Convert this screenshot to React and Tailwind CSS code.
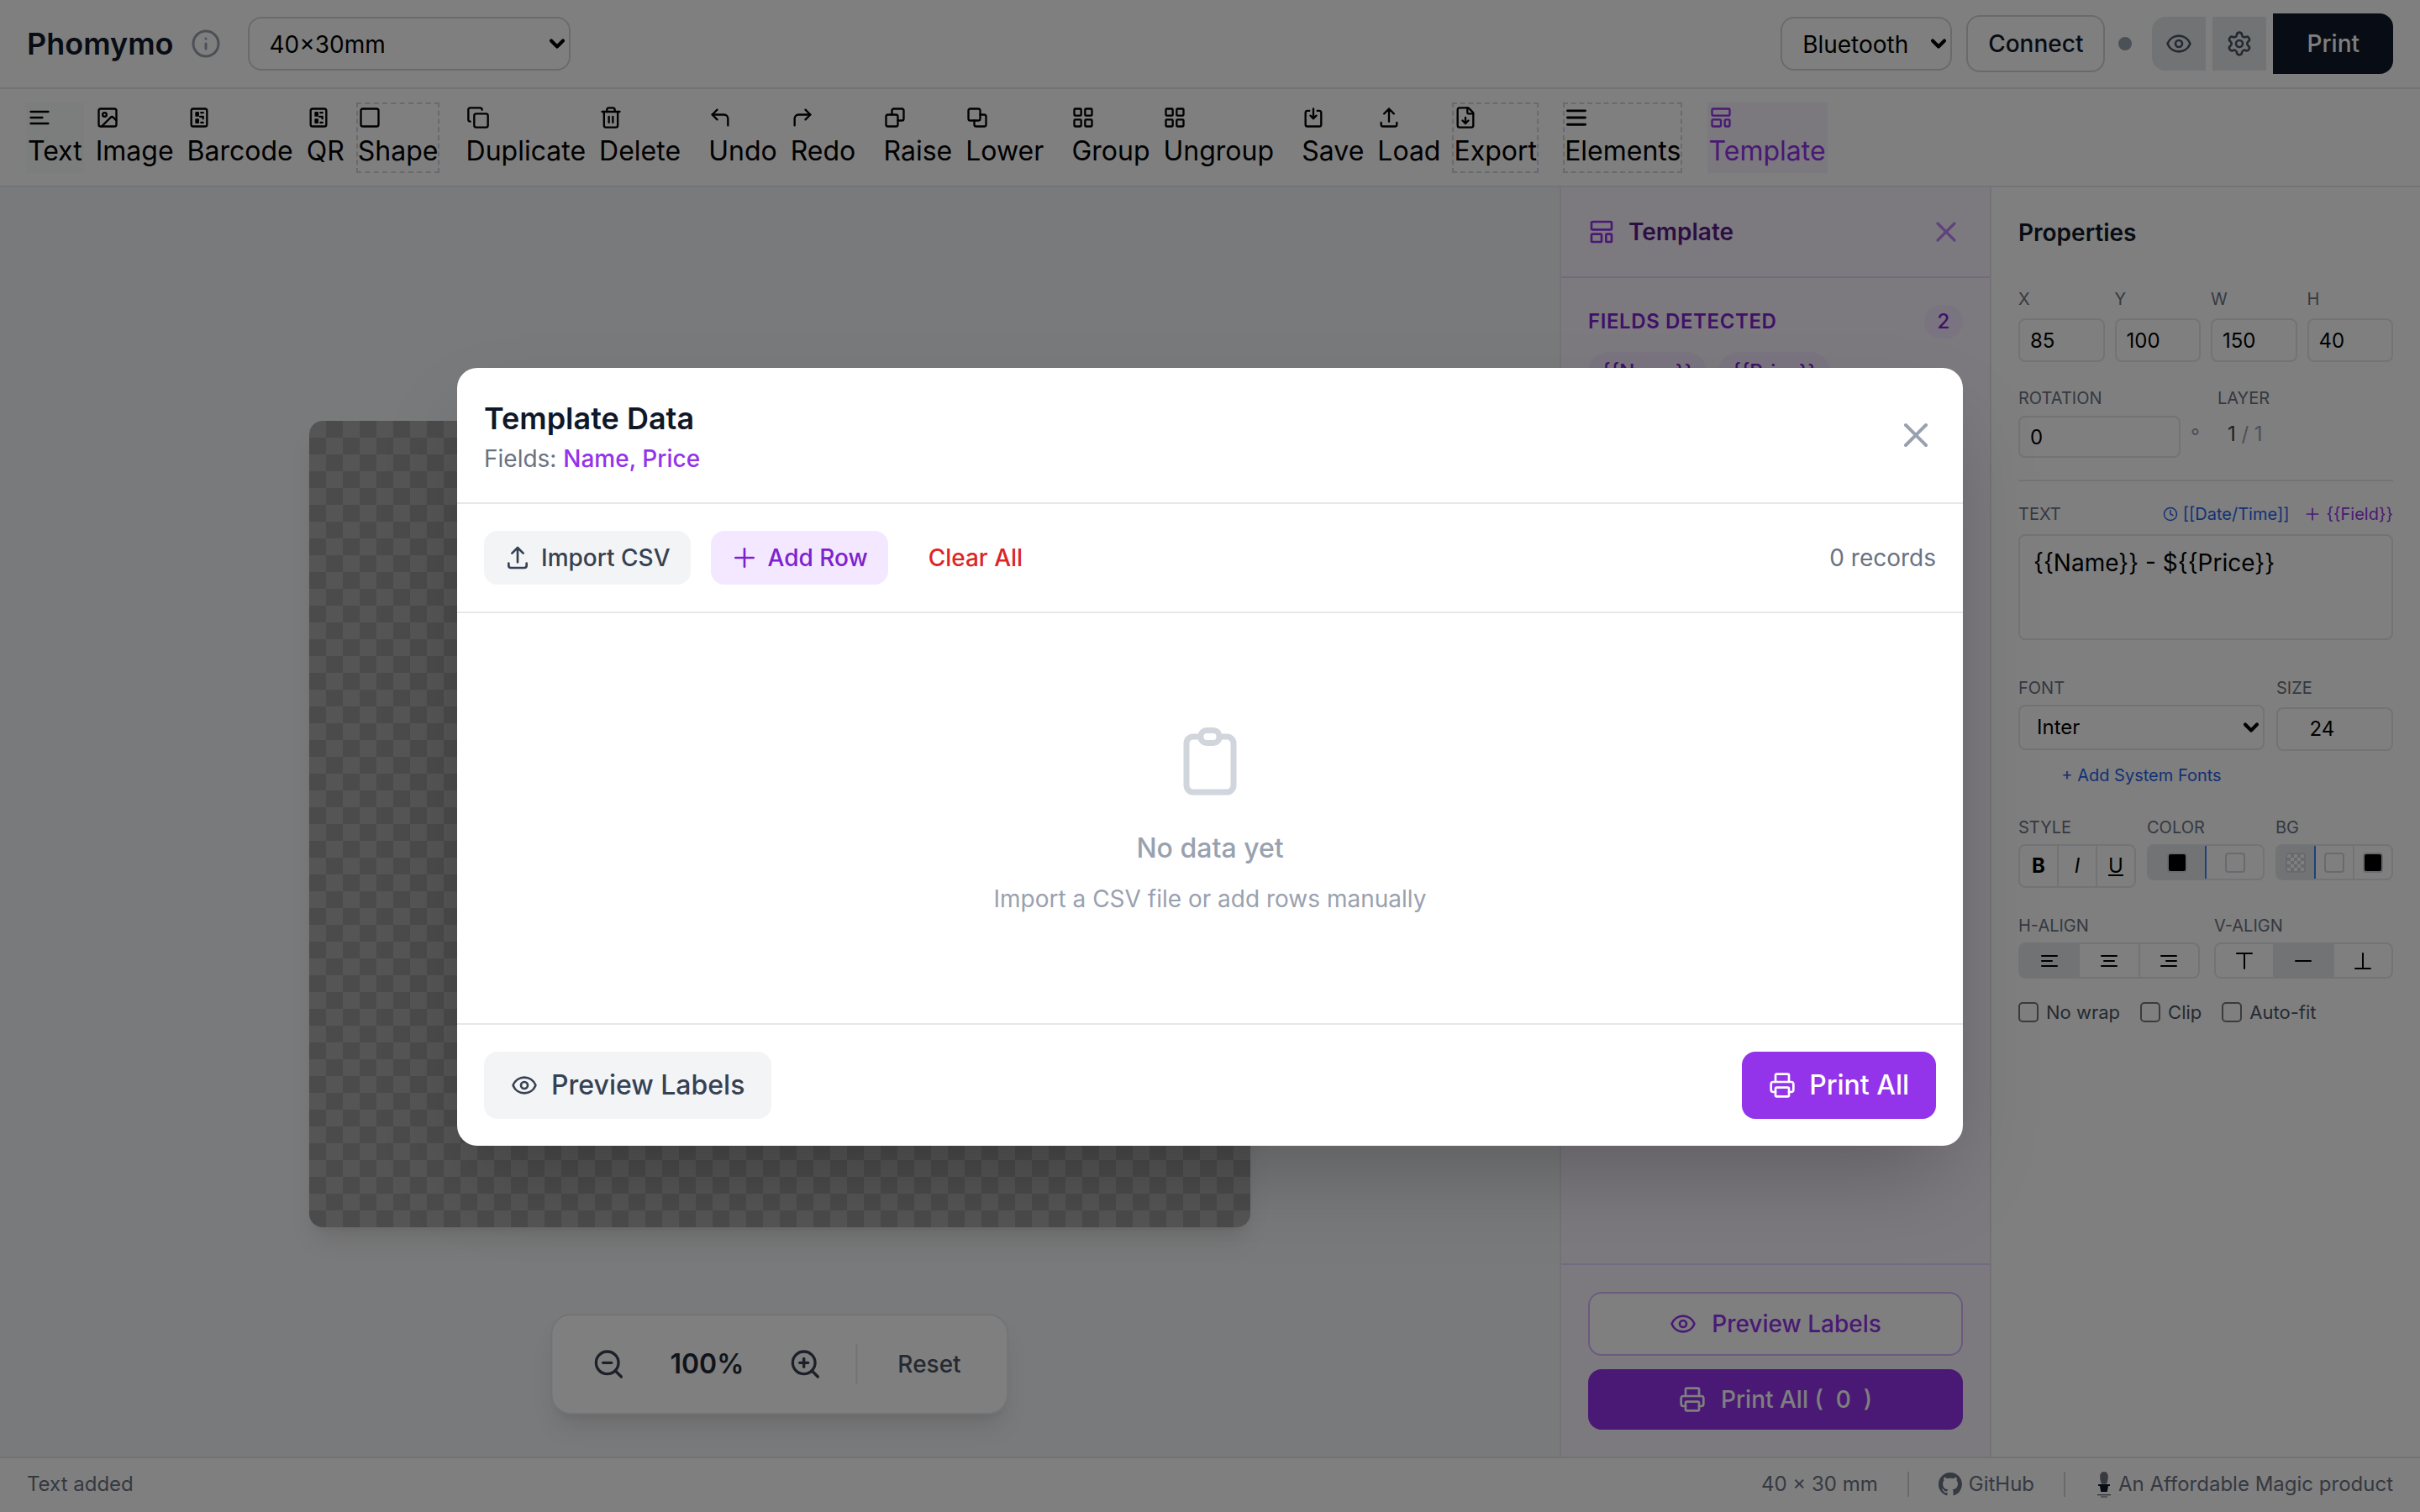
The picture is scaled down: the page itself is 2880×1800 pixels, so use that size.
import { AlignJustify, ChevronDown, Clock, Copy, CornerUpLeft, CornerUpRight, Eye, FileDown, Image, Info, LayoutGrid, LayoutTemplate, Printer, Settings, Trash2, X, ZoomIn, ZoomOut } from 'lucide-react';

// shrunk canvas is 1440x900 css px, shown at 2x through [zoom:2]
const Svg = ({ size = 14, sw = 2, className = '', children }) => (
  <svg width={size} height={size} viewBox="0 0 24 24" fill="none" stroke="currentColor" strokeWidth={sw} strokeLinecap="round" strokeLinejoin="round" className={className}>
    {children}
  </svg>
);

const TextIcon = () => <Svg><path d="M3 6h18M3 12h12M3 18h18" /></Svg>;
const BarcodeIcon = () => (
  <Svg>
    <rect x="4" y="3" width="16" height="18" rx="2" />
    <path d="M9 7h2v3H9zM14 7h2M13 11h3v2M9 14h2v3H9zM14 17h2" />
  </Svg>
);
const ShapeIcon = () => <Svg><rect x="3" y="3" width="18" height="18" rx="2" /></Svg>;
const RaiseIcon = () => (
  <Svg>
    <rect x="3" y="9" width="12" height="12" rx="2" />
    <path d="M9 9V5a2 2 0 0 1 2-2h8a2 2 0 0 1 2 2v8a2 2 0 0 1-2 2h-4" />
  </Svg>
);
const LowerIcon = () => (
  <Svg>
    <rect x="3" y="3" width="12" height="12" rx="2" />
    <path d="M15 9h4a2 2 0 0 1 2 2v8a2 2 0 0 1-2 2h-8a2 2 0 0 1-2-2v-4" />
  </Svg>
);
const SaveIcon = () => (
  <Svg>
    <path d="M8 5H6a2 2 0 0 0-2 2v12a2 2 0 0 0 2 2h12a2 2 0 0 0 2-2V7a2 2 0 0 0-2-2h-2" />
    <path d="M12 3v10M9 10l3 3 3-3" />
  </Svg>
);
const LoadIcon = ({ size = 14 }) => (
  <Svg size={size}>
    <path d="M4 17v2a2 2 0 0 0 2 2h12a2 2 0 0 0 2-2v-2M12 3v13M7 8l5-5 5 5" />
  </Svg>
);
const PlusIcon = ({ size = 16 }) => <Svg size={size}><path d="M12 4v16M20 12H4" /></Svg>;

const ToolBtn = ({ icon, label, dashed, active, soft }) => (
  <button
    className={`flex flex-col items-start border text-base leading-6 ${
      dashed ? 'border-dashed border-gray-300' : 'border-transparent'
    } ${active ? 'bg-[#f6f0fd] text-[#9333ea]' : 'text-black'} ${soft ? 'bg-gray-50' : ''}`}
  >
    <span className="flex h-4 items-center">{icon}</span>
    <span>{label}</span>
  </button>
);

const toolGroups = [
  [
    { icon: <TextIcon />, label: 'Text', soft: true },
    { icon: <Image size={14} />, label: 'Image' },
    { icon: <BarcodeIcon />, label: 'Barcode' },
    { icon: <BarcodeIcon />, label: 'QR' },
    { icon: <ShapeIcon />, label: 'Shape', dashed: true },
  ],
  [
    { icon: <Copy size={14} />, label: 'Duplicate' },
    { icon: <Trash2 size={14} />, label: 'Delete' },
  ],
  [
    { icon: <CornerUpLeft size={14} />, label: 'Undo' },
    { icon: <CornerUpRight size={14} />, label: 'Redo' },
  ],
  [
    { icon: <RaiseIcon />, label: 'Raise' },
    { icon: <LowerIcon />, label: 'Lower' },
  ],
  [
    { icon: <LayoutGrid size={14} />, label: 'Group' },
    { icon: <LayoutGrid size={14} />, label: 'Ungroup' },
  ],
  [
    { icon: <SaveIcon />, label: 'Save' },
    { icon: <LoadIcon />, label: 'Load' },
    { icon: <FileDown size={14} />, label: 'Export', dashed: true },
  ],
  [{ icon: <AlignJustify size={14} strokeWidth={2.5} />, label: 'Elements', dashed: true }],
  [{ icon: <LayoutTemplate size={14} />, label: 'Template', active: true }],
];

const Label = ({ children, className = '' }) => (
  <div className={`text-[10px] leading-[15px] uppercase text-gray-500 ${className}`}>{children}</div>
);

const NumInput = ({ value, className = '' }) => (
  <input
    readOnly
    value={value}
    className={`min-w-0 rounded border border-gray-200 bg-white px-1.5 text-xs text-black ${className}`}
  />
);

const Select = ({ value, className = '', selectClass = '' }) => (
  <div className={`relative ${className}`}>
    <select className={`h-full w-full appearance-none border bg-white text-black ${selectClass}`}>
      <option>{value}</option>
    </select>
    <ChevronDown size={14} strokeWidth={3.5} className="pointer-events-none absolute right-px top-1/2 -translate-y-1/2 text-black" />
  </div>
);

const Seg = ({ active, className = '', children }) => (
  <div className={`flex flex-1 items-center justify-center ${active ? 'bg-gray-200' : ''} ${className}`}>{children}</div>
);

const Swatch = ({ className = '' }) => <div className={`h-3 w-3 rounded-[2px] border border-gray-300 ${className}`} />;

const AlignIcon = ({ d }) => <Svg size={12} sw={2}><path d={d} /></Svg>;

const App = () => {
  return (
    <div className="relative h-[900px] w-[1440px] overflow-hidden bg-white font-['Inter',sans-serif] [zoom:2]">
      <div className="flex h-full flex-col">
        {/* Header */}
        <header className="flex h-[53px] shrink-0 items-center border-b border-gray-200 px-4">
          <h1 className="text-lg font-semibold text-gray-900">Phomymo</h1>
          <Info size={18} className="ml-2.5 text-gray-400" />
          <Select value="40×30mm" className="ml-4 h-8 w-48" selectClass="rounded-lg border-gray-300 px-3 pt-px text-sm" />
          <div className="ml-auto flex items-center">
            <Select value="Bluetooth" className="h-8 w-[102px]" selectClass="rounded-lg border-gray-300 px-3 pt-px text-sm" />
            <button className="ml-[8.5px] h-[34px] rounded-lg border border-gray-300 px-3 text-sm font-medium text-gray-900">Connect</button>
            <span className="ml-2 h-2 w-2 rounded-full bg-gray-400" />
            <button className="ml-3 flex h-8 w-8 items-center justify-center rounded-l-lg bg-gray-200 text-gray-600"><Eye size={16} /></button>
            <button className="ml-1 flex h-8 w-8 items-center justify-center bg-gray-200 text-gray-600"><Settings size={16} /></button>
            <button className="ml-1 h-9 rounded-r-lg bg-gray-900 px-5 text-sm font-medium text-white">Print</button>
          </div>
        </header>

        {/* Toolbar */}
        <div className="flex h-[58.5px] shrink-0 items-start gap-[14.6px] border-b border-gray-200 pl-[15.5px] pt-2">
          {toolGroups.map((group, i) => (
            <div key={i} className="flex gap-[6px]">
              {group.map((tool) => (
                <ToolBtn key={tool.label} {...tool} />
              ))}
            </div>
          ))}
        </div>

        <div className="flex min-h-0 flex-1">
          {/* Canvas */}
          <main className="relative flex flex-1 items-center justify-center bg-gray-100 pt-0.5">
            <div className="h-[480px] w-[560px] rounded-lg bg-[conic-gradient(#969696_25%,#aaaaaa_0_50%,#969696_0_75%,#aaaaaa_0)] bg-[length:20px_20px] shadow-lg" />
            <div className="absolute bottom-[25px] left-1/2 flex h-[60px] -translate-x-1/2 items-center gap-2 rounded-xl border border-gray-200 bg-white px-[15.5px] shadow-lg">
              <button className="p-2 text-gray-700"><ZoomOut size={20} /></button>
              <span className="w-[65px] text-center text-base font-semibold text-gray-800">100%</span>
              <button className="p-2 text-gray-700"><ZoomIn size={20} /></button>
              <span className="mx-1 h-6 w-px bg-gray-200" />
              <button className="px-3 text-sm font-medium text-gray-600">Reset</button>
            </div>
          </main>

          {/* Template panel */}
          <aside className="flex w-64 shrink-0 flex-col border-l border-gray-200 bg-[#faf5ff]">
            <div className="flex h-[54px] shrink-0 items-center justify-between border-b border-[#e9d5ff] px-4">
              <div className="flex items-center gap-2">
                <LayoutTemplate size={16} className="text-[#9333ea]" />
                <span className="text-sm font-semibold text-[#581c87]">Template</span>
              </div>
              <X size={20} className="text-[#c084fc]" />
            </div>
            <div className="flex-1 px-4 pt-4">
              <div className="flex items-center justify-between">
                <span className="text-xs font-semibold uppercase tracking-wide text-[#7e22ce]">Fields detected</span>
                <span className="flex h-5 w-[23px] items-center justify-center rounded-full bg-[#f3e8ff] text-xs font-medium text-[#7e22ce]">2</span>
              </div>
              <div className="mt-2 flex gap-[7px]">
                <span className="rounded-full bg-[#f3e8ff] px-2 py-1 text-xs font-medium text-[#7e22ce]">{'{{Name}}'}</span>
                <span className="rounded-full bg-[#f3e8ff] px-2 py-1 text-xs font-medium text-[#7e22ce]">{'{{Price}}'}</span>
              </div>
            </div>
            <div className="flex shrink-0 flex-col gap-2 border-t border-[#e9d5ff] p-4">
              <button className="flex h-[38px] items-center justify-center gap-[9px] rounded-lg border border-[#d8b4fe] bg-white text-sm font-medium text-[#9333ea]">
                <Eye size={16} />
                <span>Preview Labels</span>
              </button>
              <button className="flex h-9 items-center justify-center gap-[9px] rounded-lg bg-[#9333ea] text-sm font-medium text-white">
                <Printer size={16} />
                <span className="whitespace-pre">{'Print All (  0  )'}</span>
              </button>
            </div>
          </aside>

          {/* Properties panel */}
          <aside className="w-64 shrink-0 border-l border-gray-200 bg-white">
            <div className="flex h-[54px] items-center pl-4 text-sm font-semibold text-gray-900">Properties</div>
            <div className="px-4 pt-[5px]">
              <div className="grid grid-cols-4 gap-1.5">
                {[['X', 85], ['Y', 100], ['W', 150], ['H', 40]].map(([name, value]) => (
                  <div key={name} className="flex flex-col gap-1">
                    <Label>{name}</Label>
                    <NumInput value={value} className="h-[26px] w-full" />
                  </div>
                ))}
              </div>

              <div className="mt-3.5 flex">
                <div>
                  <Label className="mb-[3px]">Rotation</Label>
                  <div className="flex items-center">
                    <NumInput value="0" className="h-[25px] w-[96.5px]" />
                    <span className="ml-1.5 text-xs text-gray-400">°</span>
                  </div>
                </div>
                <div className="ml-[10.5px]">
                  <Label className="mb-[3px]">Layer</Label>
                  <div className="pl-1.5 text-xs leading-[22px] text-gray-700">1 <span className="text-gray-400">/ 1</span></div>
                </div>
              </div>

              <div className="mt-[13px] border-t border-gray-200 pt-3">
                <div className="flex items-center justify-between">
                  <Label>Text</Label>
                  <div className="flex items-center gap-[9px] text-[10px] leading-[15px]">
                    <span className="flex items-center gap-[3px] text-[#2563eb]"><Clock size={9} />[[Date/Time]]</span>
                    <span className="flex items-center gap-[3px] text-[#9333ea]"><PlusIcon size={10} />{'{{Field}}'}</span>
                  </div>
                </div>
                <textarea
                  readOnly
                  value="{{Name}} - ${{Price}}"
                  className="mt-[4.5px] block h-[63px] w-full resize-none rounded border border-gray-200 px-2 py-1.5 text-sm text-black"
                />
              </div>

              <div className="mt-[21px] flex gap-[7px]">
                <div className="w-[146.5px]">
                  <Label className="mb-[2.5px]">Font</Label>
                  <Select value="Inter" className="h-[27px] w-full" selectClass="rounded border-gray-200 px-2.5 text-xs" />
                  <div className="mt-[7.5px] text-center text-[10px] leading-[15px] text-[#2563eb]">+ Add System Fonts</div>
                </div>
                <div className="flex-1">
                  <Label className="mb-[3.5px]">Size</Label>
                  <input readOnly value="24" className="h-[26px] w-full rounded border border-gray-200 pr-[15px] text-center text-xs text-black" />
                </div>
              </div>

              <div className="mt-4 flex items-start">
                <div className="w-[76.5px]">
                  <Label className="mb-[2.5px]">Style</Label>
                  <div className="flex h-[26px] w-[70px] rounded border border-gray-200 text-xs text-black">
                    <Seg className="border-r border-gray-200 font-bold">B</Seg>
                    <Seg className="border-r border-gray-200 italic">I</Seg>
                    <Seg className="underline">U</Seg>
                  </div>
                </div>
                <div className="w-[76.5px]">
                  <Label className="mb-[2.5px]">Color</Label>
                  <div className="flex h-[21.5px] w-[70px] overflow-hidden rounded border border-gray-200">
                    <Seg active className="border-r border-[#3b82f6]"><Swatch className="border-gray-200 bg-black" /></Seg>
                    <Seg><Swatch className="bg-white" /></Seg>
                  </div>
                </div>
                <div className="flex-1">
                  <Label className="mb-[2.5px]">BG</Label>
                  <div className="flex h-[21.5px] overflow-hidden rounded border border-gray-200">
                    <Seg active className="border-r border-[#3b82f6]">
                      <div className="h-3 w-3 rounded-[2px] border border-gray-300 bg-[conic-gradient(#d1d5db_25%,#ffffff_0_50%,#d1d5db_0_75%,#ffffff_0)] bg-[length:4px_4px]" />
                    </Seg>
                    <Seg className="border-r border-gray-200"><Swatch className="bg-white" /></Seg>
                    <Seg><Swatch className="border-gray-200 bg-black" /></Seg>
                  </div>
                </div>
              </div>

              <div className="mt-[15px] flex justify-between">
                <div className="w-[108px]">
                  <Label className="mb-[2.5px]">H-Align</Label>
                  <div className="flex h-[21.5px] overflow-hidden rounded border border-gray-200 text-black">
                    <Seg active className="border-r border-gray-200"><AlignIcon d="M3 6h18M3 12h12M3 18h18" /></Seg>
                    <Seg className="border-r border-gray-200"><AlignIcon d="M3 6h18M6 12h12M3 18h18" /></Seg>
                    <Seg><AlignIcon d="M3 6h18M9 12h12M3 18h18" /></Seg>
                  </div>
                </div>
                <div className="w-[106.5px]">
                  <Label className="mb-[2.5px]">V-Align</Label>
                  <div className="flex h-[21.5px] overflow-hidden rounded border border-gray-200 text-black">
                    <Seg className="border-r border-gray-200"><AlignIcon d="M3 3h18M12 3v18" /></Seg>
                    <Seg active className="border-r border-gray-200"><AlignIcon d="M3 12h18" /></Seg>
                    <Seg><AlignIcon d="M3 21h18M12 3v18" /></Seg>
                  </div>
                </div>
              </div>

              <div className="mt-3 flex items-center gap-3 text-[11px] leading-4 text-gray-600">
                {['No wrap', 'Clip', 'Auto-fit'].map((name) => (
                  <label key={name} className="flex items-center gap-[4.5px]">
                    <input type="checkbox" className="m-0 h-3 w-3" /> {name}
                  </label>
                ))}
              </div>
            </div>
          </aside>
        </div>

        {/* Status bar */}
        <footer className="flex h-[33px] shrink-0 items-center justify-between border-t border-gray-200 bg-white px-4 pb-px text-xs text-gray-500">
          <span>Text added</span>
          <div className="flex items-center gap-[17.5px]">
            <span>40 × 30 mm</span>
            <span className="h-[15px] w-px bg-gray-300" />
            <span className="flex items-center gap-1">
              <svg width="14" height="14" viewBox="0 0 16 16" fill="currentColor">
                <path d="M8 0C3.58 0 0 3.58 0 8c0 3.54 2.29 6.53 5.47 7.59.4.07.55-.17.55-.38 0-.19-.01-.82-.01-1.49-2.01.37-2.53-.49-2.69-.94-.09-.23-.48-.94-.82-1.13-.28-.15-.68-.52-.01-.53.63-.01 1.08.58 1.23.82.72 1.21 1.87.87 2.33.66.07-.52.28-.87.51-1.07-1.78-.2-3.64-.89-3.64-3.95 0-.87.31-1.59.82-2.15-.08-.2-.36-1.02.08-2.12 0 0 .67-.21 2.2.82.64-.18 1.32-.27 2-.27s1.36.09 2 .27c1.53-1.04 2.2-.82 2.2-.82.44 1.1.16 1.92.08 2.12.51.56.82 1.27.82 2.15 0 3.07-1.87 3.75-3.65 3.95.29.25.54.73.54 1.48 0 1.07-.01 1.93-.01 2.2 0 .21.15.46.55.38A8.01 8.01 0 0 0 16 8c0-4.42-3.58-8-8-8z" />
              </svg>
              GitHub
            </span>
            <span className="h-[15px] w-px bg-gray-300" />
            <span className="flex items-center gap-[3px]">
              <svg width="11" height="16" viewBox="0 0 11 16" className="text-gray-900" fill="currentColor">
                <path d="M3 9h5l-.6 3.5H3.600zM2 8h7v1H2z" />
                <path d="M5.500.5c1.600 0 2.600 1.400 2.400 3.400-.1 1.500-.6 3-.9 4H4c-.3-1-.9-2.500-.9-4C2.900 1.900 3.900.5 5.500.5z" opacity="0.6" />
                <path d="M1.500 14h8v.6h-8zM3.500 15.200h4v.5h-4z" opacity="0.7" />
              </svg>
              An Affordable Magic product
            </span>
          </div>
        </footer>
      </div>

      {/* Modal */}
      <div className="absolute inset-0 flex items-center justify-center bg-black/50 pt-px">
        <div className="w-full max-w-4xl rounded-xl bg-white shadow-2xl">
          <div className="flex items-center justify-between border-b border-gray-200 p-4">
            <div>
              <h2 className="text-lg font-semibold text-gray-900">Template Data</h2>
              <p className="text-sm text-gray-500">Fields: <span className="font-medium text-[#9333ea]">Name, Price</span></p>
            </div>
            <X size={24} className="text-gray-400" />
          </div>

          <div className="flex items-center border-b border-gray-200 p-4">
            <div className="flex items-center gap-3">
              <button className="flex h-8 items-center gap-1.5 rounded-lg bg-gray-100 px-3 text-sm font-medium text-gray-700"><LoadIcon size={16} /> Import CSV</button>
              <button className="flex h-8 items-center gap-1.5 rounded-lg bg-[#f3e8ff] px-3 text-sm font-medium text-[#7e22ce]"><PlusIcon /> Add Row</button>
              <button className="h-8 px-3 text-sm font-medium text-[#dc2626]">Clear All</button>
            </div>
            <span className="ml-auto text-sm text-gray-500">0 records</span>
          </div>

          <div className="flex flex-col items-center border-b border-gray-200 py-16">
            <svg width="48" height="48" viewBox="0 0 48 48" fill="none" stroke="currentColor" strokeWidth="3.5" strokeLinejoin="round" className="mb-4 text-gray-300">
              <path d="M18.500 9.500H14a4 4 0 0 0-4 4V38.500a4 4 0 0 0 4 4H34a4 4 0 0 0 4-4V13.500a4 4 0 0 0-4-4H29.500" />
              <rect x="18.500" y="5.750" width="11" height="7.500" rx="3.500" />
            </svg>
            <p className="mb-2 font-medium text-gray-400">No data yet</p>
            <p className="text-sm text-gray-400">Import a CSV file or add rows manually</p>
          </div>

          <div className="flex items-center justify-between p-4">
            <button className="flex h-10 items-center gap-2 rounded-lg bg-gray-100 px-4 font-medium text-gray-700"><Eye size={16} /> Preview Labels</button>
            <button className="flex h-10 items-center gap-2 rounded-lg bg-[#9333ea] px-4 font-medium text-white"><Printer size={16} /> Print All</button>
          </div>
        </div>
      </div>
    </div>
  );
};

export default App;
